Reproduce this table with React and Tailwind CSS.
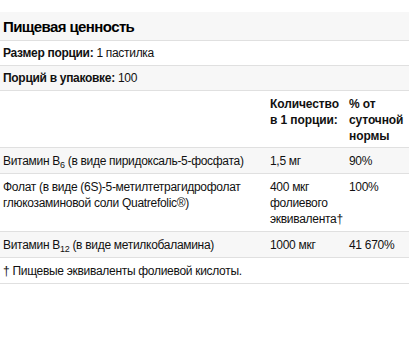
import React from "react";

const rows = [
  {
    name: (
      <>
        Витамин B<sub className="text-[9px] leading-none relative top-[3px] align-baseline">6</sub> (в виде пиридоксаль-5-фосфата)
      </>
    ),
    amount: "1,5 мг",
    dv: "90%",
    gray: true,
  },
  {
    name: "Фолат (в виде (6S)-5-метилтетрагидрофолат глюкозаминовой соли Quatrefolic®)",
    amount: (
      <>
        400 мкг
        <br />
        фолиевого
        <br />
        <span className="whitespace-nowrap">эквивалента†</span>
      </>
    ),
    dv: "100%",
    gray: false,
  },
  {
    name: (
      <>
        Витамин B<sub className="text-[9px] leading-none relative top-[3px] align-baseline">12</sub> (в виде метилкобаламина)
      </>
    ),
    amount: "1000 мкг",
    dv: "41 670%",
    gray: true,
  },
];

export default function App() {
  return (
    <div
      className="w-[409px] h-[348px] bg-white text-[#111] pt-[12px] tracking-[-0.3px]"
      style={{ fontFamily: "'Liberation Sans', Arial, sans-serif" }}
    >
      <div className="bg-[#f7f7f7] border-b border-[#e0e0e0] h-[29px] px-[3px] flex items-center">
        <h2 className="text-[15px] font-bold leading-none tracking-[-0.6px] text-black">Пищевая ценность</h2>
      </div>
      <div className="border-b border-[#e0e0e0] h-[25px] px-[3px] flex items-center text-[12px]">
        <span className="font-bold mr-[3px]">Размер порции:</span>1 пастилка
      </div>
      <div className="bg-[#f7f7f7] border-b border-[#e0e0e0] h-[25px] px-[3px] flex items-center text-[12px]">
        <span className="font-bold mr-[3px]">Порций в упаковке:</span>100
      </div>

      <div className="grid grid-cols-[267px_79px_1fr] text-[12px] leading-[16px]">
        <div className="border-b border-[#e0e0e0] h-[57px]"></div>
        <div className="border-b border-[#e0e0e0] h-[57px] px-[3px] pt-[5px] font-bold whitespace-nowrap tracking-[-0.1px]">
          Количество
          <br />
          в 1 порции:
        </div>
        <div className="border-b border-[#e0e0e0] h-[57px] px-[3px] pt-[5px] font-bold whitespace-nowrap tracking-[-0.1px]">
          % от
          <br />
          суточной
          <br />
          нормы
        </div>

        {rows.map((r, i) => (
          <React.Fragment key={i}>
            <div className={`border-b border-[#e0e0e0] px-[3px] pt-[5px] pb-[4px] ${r.gray ? "bg-[#f7f7f7]" : ""}`}>
              {r.name}
            </div>
            <div className={`border-b border-[#e0e0e0] px-[3px] pt-[5px] pb-[4px] ${r.gray ? "bg-[#f7f7f7]" : ""}`}>
              {r.amount}
            </div>
            <div className={`border-b border-[#e0e0e0] px-[3px] pt-[5px] pb-[4px] whitespace-nowrap ${r.gray ? "bg-[#f7f7f7]" : ""}`}>
              {r.dv}
            </div>
          </React.Fragment>
        ))}
      </div>

      <div className="border-b border-[#e0e0e0] h-[26px] px-[3px] flex items-center text-[12px]">
        † Пищевые эквиваленты фолиевой кислоты.
      </div>
    </div>
  );
}
